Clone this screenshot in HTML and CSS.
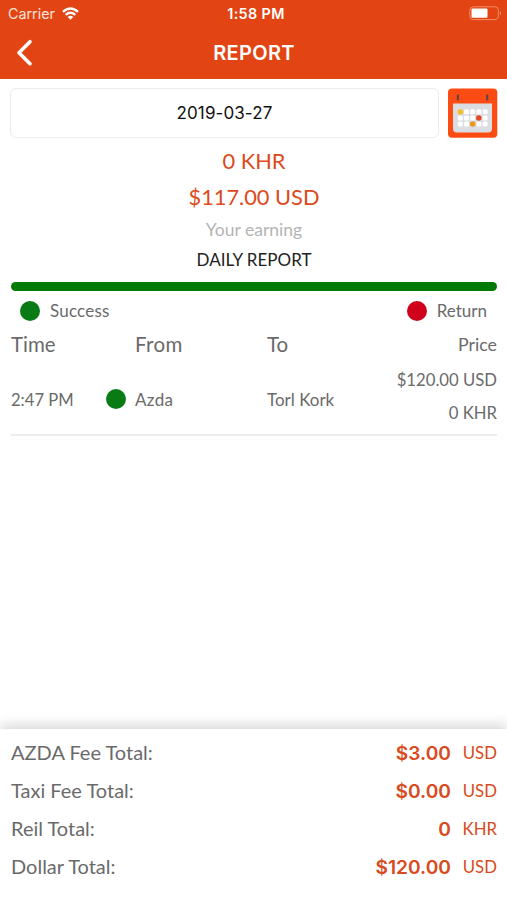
FILE: index.html
```html
<!DOCTYPE html>
<html lang="en">
<head>
<meta charset="utf-8">
<title>Report</title>
<link rel="stylesheet" href="styles.css">
</head>
<body>
<div class="screen">
  <header class="header">
    <div class="status">
      <div class="carrier"><span>Carrier</span>
        <svg class="wifi" width="17" height="13" viewBox="0 0 17 13" fill="none" stroke="#fff" stroke-width="2.300"><path d="M1 4.900Q8.500-1.900 16 4.900M3.700 7.900Q8.500 3.700 13.300 7.900"/><path d="M5.700 10Q8.500 7.600 11.300 10L8.500 12.800Z" fill="#fff" stroke="none"/></svg>
      </div>
      <span class="clock">1:58 PM</span>
      <svg class="battery" width="33" height="15" viewBox="0 0 33 15"><rect x=".8" y=".8" width="28.600" height="12.800" rx="3.500" fill="none" stroke="#f28c6b"/><rect x="2.500" y="2.600" width="16" height="9.200" rx="1" fill="#fff"/><path d="M31 5Q33 7.200 31 9.400Z" fill="#f5a58a"/></svg>
    </div>
    <div class="nav">
      <svg class="back" width="18" height="28" viewBox="0 0 18 28" fill="none" stroke="#fff" stroke-width="3.600" stroke-linecap="round" stroke-linejoin="round"><path d="M15 2.700L4 13.700L15 24.700"/></svg>
      <h1 class="title">REPORT</h1>
      <span></span>
    </div>
  </header>

  <main class="main">
    <div class="picker">
      <div class="date"><span>2019-03-27</span></div>
      <svg class="calendar" width="50" height="50" viewBox="0 0 50 50">
        <rect x="0" y=".5" width="49.300" height="49.300" rx="4" fill="#fc4c14"/>
        <path d="M5 15.500H44V40.500a4 4 0 0 1-4 4H9a4 4 0 0 1-4-4Z" fill="#dadde2"/>
        <path d="M9.900 6.500V12.500M39.200 6.500V12.500" stroke="#684343" stroke-width="2.200"/>
        <g fill="#fff">
          <rect x="16" y="21.300" width="5" height="5" rx="1.500"/><rect x="22.200" y="21.300" width="5" height="5" rx="1.500"/><rect x="28.400" y="21.300" width="5" height="5" rx="1.500"/><rect x="34.600" y="21.300" width="5" height="5" rx="1.500"/>
          <rect x="9.800" y="27.500" width="5" height="5" rx="1.500"/><rect x="16" y="27.500" width="5" height="5" rx="1.500"/><rect x="22.200" y="27.500" width="5" height="5" rx="1.500"/><rect x="34.600" y="27.500" width="5" height="5" rx="1.500"/>
          <rect x="9.800" y="33.500" width="5" height="5" rx="1.500"/><rect x="16" y="33.500" width="5" height="5" rx="1.500"/><rect x="28.400" y="33.500" width="5" height="5" rx="1.500"/><rect x="34.600" y="33.500" width="5" height="5" rx="1.500"/>
        </g>
        <circle cx="12.400" cy="24" r="2.800" fill="#f8bd22"/><circle cx="30.800" cy="30" r="2.800" fill="#df4a26"/><circle cx="24.700" cy="36" r="2.800" fill="#ec981e"/>
      </svg>
    </div>

    <section class="summary">
      <div class="amount khr">0 KHR</div>
      <div class="amount">$117.00 USD</div>
      <div class="caption">Your earning</div>
      <div class="heading">DAILY REPORT</div>
    </section>

    <div class="bar"></div>
    <div class="legend">
      <div class="key"><i class="dot"></i><span class="success">Success</span></div>
      <div class="key"><i class="dot red"></i><span>Return</span></div>
    </div>

    <div class="columns head">
      <span>Time</span><span></span><span class="h-from">From</span><span>To</span><span class="price h-price">Price</span>
    </div>
    <div class="columns trip">
      <span class="time">2:47 PM</span><i class="dot"></i><span class="from">Azda</span><span>Torl Kork</span>
      <div class="price prices"><span>$120.00 USD</span><span>0 KHR</span></div>
    </div>
  </main>

  <footer class="totals">
    <div class="total"><span class="label">AZDA Fee Total:</span><span class="value">$3.00</span><span class="unit">USD</span></div>
    <div class="total"><span class="label">Taxi Fee Total:</span><span class="value">$0.00</span><span class="unit">USD</span></div>
    <div class="total"><span class="label">Reil Total:</span><span class="value">0</span><span class="unit">KHR</span></div>
    <div class="total"><span class="label">Dollar Total:</span><span class="value">$120.00</span><span class="unit">USD</span></div>
  </footer>
</div>
</body>
</html>
```
FILE: styles.css
```css
* { box-sizing: border-box; }
body { margin: 0; background: #fff; }
.screen {
  width: 507px; height: 900px; overflow: hidden;
  display: flex; flex-direction: column;
  font-family: Lato, sans-serif; font-size: 17px; color: #6a6a6a;
  white-space: nowrap;
}
.header { height: 79px; background: #e34413; color: #fff; font-family: Inter, sans-serif; }
.status { display: grid; grid-template-columns: 1fr auto 1fr; align-items: center; height: 27px; padding: 0 5px 0 8px; }
.carrier { display: flex; align-items: center; gap: 7px; font-size: 14.3px; color: #ffe4dc; }
.clock { padding-left: 2px; font-size: 14.3px; font-weight: 600; letter-spacing: .4px; }
.battery { justify-self: end; }
.nav { display: grid; grid-template-columns: 1fr auto 1fr; align-items: center; height: 51px; padding: 0 14px 0 15px; }
.title { margin: 0; font-size: 20px; font-weight: 600; letter-spacing: .3px; }
.main { flex: 1; padding: 9px 10px 0 11px; }
.picker { display: flex; justify-content: space-between; height: 50px; margin: 0 -1px; }
.date {
  width: 429px; border: 1px solid #ebebeb; border-radius: 6px;
  display: flex; align-items: center; justify-content: center;
  font: 400 17px Inter, sans-serif; letter-spacing: .1px; color: #111;
}
.summary { display: flex; flex-direction: column; align-items: center; padding-top: 6px; }
.amount { font-size: 21.8px; line-height: 35px; color: #dc4a20; }
.khr { margin-top: -1px; padding-bottom: 1px; }
.caption { padding-top: 1px; font-size: 17.5px; line-height: 30px; color: #b4b4b4; }
.heading { font-size: 17px; line-height: 30px; color: #222; }
.bar { height: 9px; margin-top: 7px; border-radius: 5px; background: #037a05; }
.legend { display: flex; justify-content: space-between; height: 40px; padding: 0 10px 0 9px; }
.key { display: flex; align-items: center; gap: 10px; }
.key span { padding-bottom: 1px; }
.success { letter-spacing: .2px; }
.dot { width: 20px; height: 20px; border-radius: 50%; background: #087b15; }
.red { background: #d0021b; }
.columns { display: grid; grid-template-columns: 95px 29px 132px 90px 1fr; align-items: center; }
.head { height: 29px; padding-bottom: 3px; font-size: 20.5px; }
.h-from { letter-spacing: .4px; }
.price { text-align: right; }
.h-price { font-size: 17.8px; }
.trip { height: 76px; padding-top: 4px; border-bottom: 2px solid #ececec; }
.time { padding-top: 1px; font-size: 16.6px; }
.from { letter-spacing: .3px; }
.prices { display: flex; flex-direction: column; align-items: flex-end; font-size: 16.7px; line-height: 33px; margin-top: -4px; }
.totals {
  height: 171px; padding: 5px 10px 0 11px; background: #fff;
  box-shadow: 0 -4px 12px rgba(0, 0, 0, .16);
}
.total { display: flex; align-items: center; height: 38px; }
.label { margin-right: auto; padding-bottom: 2px; font-size: 20px; }
.value { font: 600 19.2px Inter, sans-serif; color: #d84a20; }
.unit { width: 46px; padding-bottom: 2px; text-align: right; font-size: 16.8px; color: #d84a20; }
```
